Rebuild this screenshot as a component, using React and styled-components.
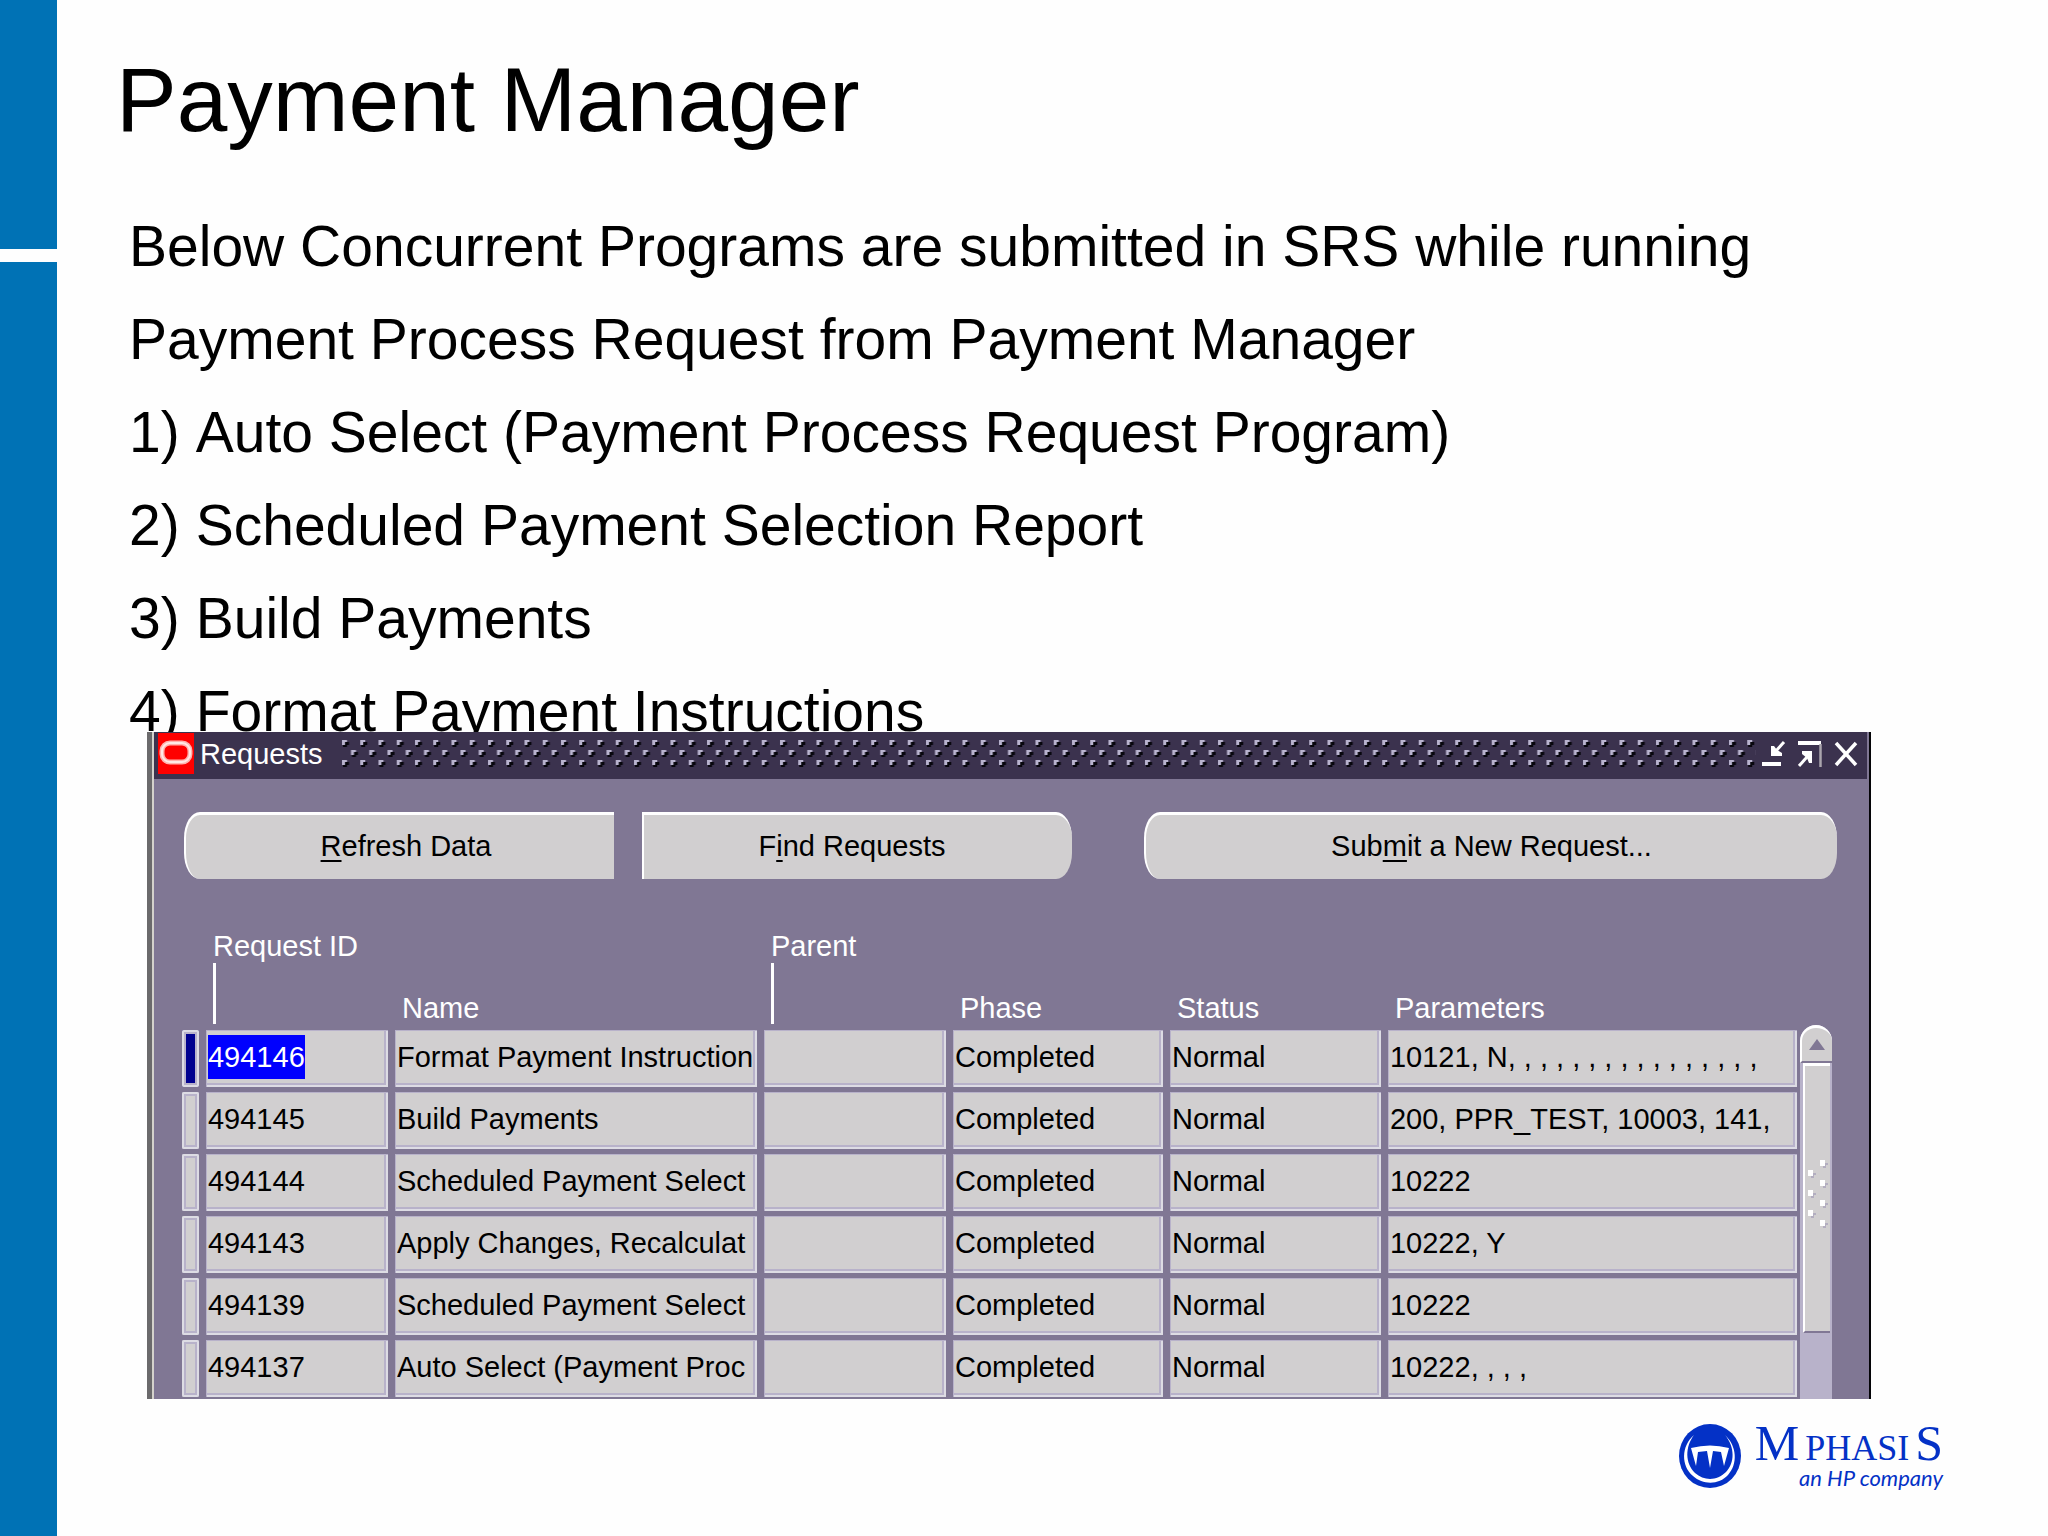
import React from "react";
import styled, { createGlobalStyle, css } from "styled-components";

const sans = `"Liberation Sans", Arial, sans-serif`;

const color = {
  brand: "#0072b5",
  logo: "#0431c6",
  panel: "#807794",
  bar: "#3b324e",
  face: "#d1cfd0",
  lavender: "#b8b2ca",
  light: "#dddce4",
};

const GlobalStyle = createGlobalStyle`
  * { box-sizing: border-box; }
  body { margin: 0; background: #fefefe; color: #000; font-family: ${sans}; }
`;

const Slide = styled.div`
  display: flex;
  min-height: 100vh;
`;

const Rail = styled.aside`
  display: flex;
  flex-direction: column;
  gap: 13px;
  width: 57px;
  flex: none;
`;

const RailBlock = styled.div`
  background: ${color.brand};
  ${(p) => (p.$fill ? "flex: 1;" : "height: 249px;")}
`;

const Content = styled.main`
  flex: 1;
  min-width: 0;
  padding-top: 48px;
`;

const Title = styled.h1`
  margin: 0 0 48px;
  padding-left: 59px;
  font-size: 91px;
  line-height: 104px;
  font-weight: 400;
`;

const Copy = styled.div`
  padding-left: 72px;
  font-size: 57px;
  line-height: 93px;
  white-space: nowrap;
`;

const Lead = styled.p`
  margin: 0;
`;

const Steps = styled.ol`
  margin: 0;
  padding: 0;
  list-style: none;
`;

const StepNumber = styled.span`
  display: inline-block;
  padding-right: 16px;
`;

const Window = styled.section`
  position: relative;
  margin: -26px 177px 0 90px;
  background: ${color.panel};
  border-left: 5px solid #6b6a6c;
  border-right: 2px solid #050508;
  font-size: 29px;
  line-height: 44px;
`;

const WindowInner = styled.div`
  overflow: hidden;
  border-left: 2px solid #d4d2cc;
  border-right: 2px solid ${color.panel};
`;

const TitleBar = styled.header`
  display: flex;
  align-items: center;
  gap: 6px;
  height: 47px;
  padding: 0 9px 4px 4px;
  background: ${color.bar};
  color: #fff;
`;

const WindowTitle = styled.h2`
  margin: 0 12px 0 0;
  font-size: inherit;
  font-weight: 400;
`;

const Grip = styled.svg`
  flex: 1;
  min-width: 0;
  height: 28px;
`;

const BarIcon = styled.svg`
  display: block;
  flex: none;
`;

const Controls = styled.div`
  display: flex;
  gap: 12px;
`;

const ControlButton = styled.button`
  padding: 0;
  border: 0;
  background: none;
  cursor: pointer;
`;

const Actions = styled.div`
  display: grid;
  grid-template-columns: 430fr 430fr 737fr;
  padding: 33px 30px 0;
  gap: 28px;
`;

const shapes = {
  left: css`
    padding: 0 0 2px 12px;
    border-radius: 16px 0 0 16px / 26px 0 0 26px;
  `,
  right: css`
    padding: 0 12px 2px 0;
    border-radius: 0 16px 16px 0 / 0 26px 26px 0;
  `,
  both: css`
    margin-left: 44px;
    padding: 0 0 2px;
    border-radius: 16px / 26px;
  `,
};

const ActionButton = styled.button`
  height: 67px;
  border: 0;
  border-top: 3px solid #fff;
  border-left: 2px solid #fff;
  background: ${color.face};
  color: #000;
  font: inherit;
  cursor: pointer;
  ${(p) => shapes[p.$shape]}
`;

const Key = styled.span`
  text-decoration: underline;
  text-decoration-thickness: 2px;
  text-underline-offset: 4px;
`;

const Records = styled.div`
  display: flex;
  margin-bottom: -3px;
  padding: 41px 35px 0 21px;
`;

const TableArea = styled.div`
  flex: 1;
  min-width: 0;
`;

const Table = styled.table`
  width: 100%;
  table-layout: fixed;
  border-collapse: separate;
  border-spacing: 7px 5px;
`;

const Heading = styled.th`
  height: 100px;
  padding: 0 0 0 7px;
  font-weight: 400;
  line-height: 34px;
  text-align: left;
  vertical-align: bottom;
  white-space: nowrap;
  color: #fff;
`;

const Raised = styled.span`
  display: block;
  height: 100px;
  padding-top: 4px;
`;

const Tick = styled.span`
  display: block;
  width: 3px;
  height: 61px;
  background: #fff;
`;

const sunken = css`
  background: ${color.face};
  box-shadow:
    inset 1px 1px ${color.lavender},
    inset -2px -2px ${color.light},
    inset -4px -4px ${color.lavender};
`;

const Cell = styled.td`
  height: 57px;
  padding: 0 3px 3px 2px;
  overflow: hidden;
  white-space: nowrap;
  ${sunken}
`;

const Clip = styled.div`
  overflow: hidden;
`;

const Marker = styled.td`
  height: 57px;
  padding: 0;
  border-radius: 2px;
  background: ${(p) => (p.$current ? "#00008f" : color.face)};
  box-shadow: inset 0 0 0 2px ${color.light}, inset 0 0 0 4px ${color.lavender};
`;

const Selected = styled.mark`
  display: inline-block;
  background: #0000fe;
  color: #fff;
`;

const ScrollBar = styled.div`
  display: flex;
  flex-direction: column;
  flex: none;
  width: 32px;
  margin: 105px 0 0 -4px;
  background: ${color.lavender};
  border-radius: 16px 16px 0 0;
`;

const ScrollUp = styled.button`
  display: flex;
  align-items: center;
  justify-content: center;
  height: 38px;
  padding: 0;
  border: 0;
  border-top: 3px solid #fff;
  border-left: 2px solid #fff;
  border-bottom: 2px solid ${color.panel};
  border-radius: 16px 16px 0 0;
  background: ${color.face};
  cursor: pointer;
`;

const Thumb = styled.div`
  display: flex;
  align-items: center;
  justify-content: center;
  height: 270px;
  margin: 0 2px 0 3px;
  padding-bottom: 10px;
  border-top: 3px solid #fff;
  border-left: 2px solid #fff;
  border-bottom: 2px solid ${color.panel};
  background: ${color.face};
`;

const Footer = styled.footer`
  display: flex;
  justify-content: flex-end;
  align-items: flex-start;
  gap: 14px;
  padding: 25px 105px 0 0;
  color: ${color.logo};
`;

const Brand = styled.div`
  display: flex;
  flex-direction: column;
  align-items: flex-end;
`;

const Name = styled.div`
  display: flex;
  align-items: baseline;
  gap: 6px;
  font-family: "Liberation Serif", "Times New Roman", serif;
  font-size: 50px;
  line-height: 38px;
`;

const SmallCaps = styled.span`
  font-size: 36px;
`;

const Tagline = styled.div`
  font-family: Lato, sans-serif;
  font-style: italic;
  font-size: 22px;
  line-height: 22px;
`;

const steps = [
  "Auto Select (Payment Process Request Program)",
  "Scheduled Payment Selection Report",
  "Build Payments",
  "Format Payment Instructions",
];

const rows = [
  ["494146", "Format Payment Instruction", "", "Completed", "Normal", "10121, N, , , , , , , , , , , , , , , ,"],
  ["494145", "Build Payments", "", "Completed", "Normal", "200, PPR_TEST, 10003, 141,"],
  ["494144", "Scheduled Payment Select", "", "Completed", "Normal", "10222"],
  ["494143", "Apply Changes, Recalculat", "", "Completed", "Normal", "10222, Y"],
  ["494139", "Scheduled Payment Select", "", "Completed", "Normal", "10222"],
  ["494137", "Auto Select (Payment Proc", "", "Completed", "Normal", "10222, , , ,"],
];

const columns = [
  { label: "", width: 17 },
  { label: "Request ID", width: 182, raised: true },
  { label: "Name", width: 362 },
  { label: "Parent", width: 182, raised: true },
  { label: "Phase", width: 210 },
  { label: "Status", width: 211 },
  { label: "Parameters", width: 409 },
];

const total = columns.reduce((sum, c) => sum + c.width, 0);

function Dot({ x, y }) {
  return (
    <>
      <path d={`M${x + 2} ${y + 2}h5v3h-2v2h-4v-3h1z`} fill="#07060d" />
      <path d={`M${x} ${y}h5v2h-2v3h-3z`} fill="#b9b4cf" />
    </>
  );
}

function TitleGrip() {
  return (
    <Grip aria-hidden="true">
      <defs>
        <pattern id="grip" width="18.25" height="28" patternUnits="userSpaceOnUse">
          <Dot x={1} y={0} />
          <Dot x={10} y={10} />
          <Dot x={1} y={20} />
        </pattern>
      </defs>
      <rect width="100%" height="28" fill="url(#grip)" />
    </Grip>
  );
}

function RequestsWindow() {
  return (
    <Window>
      <WindowInner>
        <TitleBar>
          <BarIcon width="36" height="41" viewBox="0 0 36 41">
            <rect width="36" height="41" fill="#fe0000" />
            <rect x="4" y="10" width="28" height="19" rx="8" ry="8" fill="none" stroke="#ffb3ae" strokeWidth="5" />
            <rect x="4" y="10" width="28" height="19" rx="8" ry="8" fill="none" stroke="#ffe9e6" strokeWidth="2" />
          </BarIcon>
          <WindowTitle>Requests</WindowTitle>
          <TitleGrip />
          <Controls>
            <ControlButton type="button" aria-label="Minimize">
              <BarIcon width="24" height="26" viewBox="0 0 24 26">
                <path d="M0 23h19" stroke="#fff" strokeWidth="4" />
                <path d="M22 1L13 11" fill="none" stroke="#fff" strokeWidth="3" />
                <path d="M9 5h3l3 4 5 3v3h-11z" fill="#fff" />
              </BarIcon>
            </ControlButton>
            <ControlButton type="button" aria-label="Maximize">
              <BarIcon width="24" height="26" viewBox="0 0 24 26">
                <path d="M0 2h23" stroke="#fff" strokeWidth="4" />
                <path d="M22.500 3v23" stroke="#aaa5ad" strokeWidth="2.500" />
                <path d="M1 25L9 16" fill="none" stroke="#fff" strokeWidth="3" />
                <path d="M4 10h10v12h-3l-2-5-5-4z" fill="#fff" />
              </BarIcon>
            </ControlButton>
            <ControlButton type="button" aria-label="Close">
              <BarIcon width="24" height="26" viewBox="0 0 24 26">
                <path d="M2 2L22 24M22 2L2 24" stroke="#fff" strokeWidth="3.500" />
              </BarIcon>
            </ControlButton>
          </Controls>
        </TitleBar>
        <Actions>
          <ActionButton type="button" $shape="left"><Key>R</Key>efresh Data</ActionButton>
          <ActionButton type="button" $shape="right">F<Key>i</Key>nd Requests</ActionButton>
          <ActionButton type="button" $shape="both">Sub<Key>m</Key>it a New Request...</ActionButton>
        </Actions>
        <Records>
          <TableArea>
            <Table>
              <colgroup>
                {columns.map((c, i) => (
                  <col key={i} style={{ width: `${(c.width / total) * 100}%` }} />
                ))}
              </colgroup>
              <thead>
                <tr>
                  {columns.map((c, i) =>
                    c.label ? (
                      <Heading key={i} scope="col">
                        {c.raised ? <Raised>{c.label}<Tick /></Raised> : c.label}
                      </Heading>
                    ) : (
                      <td key={i} />
                    )
                  )}
                </tr>
              </thead>
              <tbody>
                {rows.map((row, r) => (
                  <tr key={row[0]}>
                    <Marker $current={r === 0} />
                    {row.map((value, i) => (
                      <Cell key={i}>
                        <Clip>{r === 0 && i === 0 ? <Selected>{value}</Selected> : value}</Clip>
                      </Cell>
                    ))}
                  </tr>
                ))}
              </tbody>
            </Table>
          </TableArea>
          <ScrollBar>
            <ScrollUp type="button" aria-label="Scroll up">
              <BarIcon width="16" height="11" viewBox="0 0 16 11">
                <path d="M8 0l8 11H0z" fill={color.panel} />
              </BarIcon>
            </ScrollUp>
            <Thumb>
              <BarIcon width="20" height="68" viewBox="0 0 20 68">
                {[0, 1, 2, 3, 4, 5, 6].map((n) => (
                  <g key={n} transform={`translate(${n % 2 ? 0 : 12} ${n * 10})`}>
                    <path d="M3 3h5v2h-2v3h-3z" fill="#b3aec0" />
                    <rect width="5" height="6" fill="#fff" />
                  </g>
                ))}
              </BarIcon>
            </Thumb>
          </ScrollBar>
        </Records>
      </WindowInner>
    </Window>
  );
}

function Logo() {
  return (
    <Footer>
      <BarIcon width="62" height="64" viewBox="0 0 62 64">
        <ellipse cx="31" cy="32" rx="31" ry="32" fill={color.logo} />
        <path
          d="M15 11C2 22 2 42 14 52C24 61 40 61 49 51C59 40 58 22 46 11C56 23 56 39 47 48C38 57 25 57 16 49C6 39 6 23 15 11Z"
          fill="#fff"
        />
        <path
          d="M12 24Q31 19 50 24L45 42L42 28L34 27L31 44L28 27L19 28L17 42Z"
          fill="#fff"
        />
      </BarIcon>
      <Brand>
        <Name>
          <span>M</span>
          <SmallCaps>PHASI</SmallCaps>
          <span>S</span>
        </Name>
        <Tagline>an HP company</Tagline>
      </Brand>
    </Footer>
  );
}

export default function App() {
  return (
    <>
      <GlobalStyle />
      <Slide>
        <Rail>
          <RailBlock />
          <RailBlock $fill />
        </Rail>
        <Content>
          <Title>Payment Manager</Title>
          <Copy>
            <Lead>
              Below Concurrent Programs are submitted in SRS while running
              <br />
              Payment Process Request from Payment Manager
            </Lead>
            <Steps>
              {steps.map((step, i) => (
                <li key={step}><StepNumber>{i + 1})</StepNumber>{step}</li>
              ))}
            </Steps>
          </Copy>
          <RequestsWindow />
          <Logo />
        </Content>
      </Slide>
    </>
  );
}
